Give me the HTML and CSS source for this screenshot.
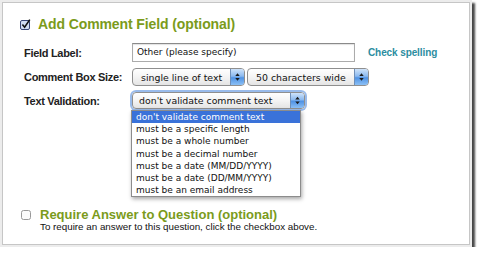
FILE: index.html
```html
<!DOCTYPE html>
<html lang="en">
<head>
  <meta charset="UTF-8">
  <title>Add Comment Field</title>
  <link rel="stylesheet" href="styles.css">
</head>
<body>
  <div class="frame">
    <div class="panel">
      <!-- comment field -->
      <h2 class="title">
        <svg class="check" width="11" height="11" viewBox="0 0 11 11">
          <rect x="0.5" y="1.5" width="9" height="9" rx="1.5" fill="#d3def2" stroke="#3a4776"/>
          <path d="M2.4 5.6 L4.6 8.2 L9.8 0.6" fill="none" stroke="#111" stroke-width="1.6"/>
        </svg>
        Add Comment Field (optional)
      </h2>

      <div class="form">
        <div class="label">Field Label:</div>
        <div class="ctrl">
          <div class="input">Other (please specify)</div>
          <a class="spell">Check spelling</a>
        </div>

        <div class="label">Comment Box Size:</div>
        <div class="ctrl">
          <div class="select size-lines"><span>single line of text</span><b class="arrows"><svg width="14" height="16" viewBox="0 0 14 16"><path d="M4.6 7 L7 4 L9.4 7Z M4.6 9 L7 12 L9.4 9Z" fill="#1b1b1b"/></svg></b></div>
          <div class="select size-width"><span>50 characters wide</span><b class="arrows"><svg width="14" height="16" viewBox="0 0 14 16"><path d="M4.6 7 L7 4 L9.4 7Z M4.6 9 L7 12 L9.4 9Z" fill="#1b1b1b"/></svg></b></div>
        </div>

        <div class="label">Text Validation:</div>
        <div class="ctrl">
          <div class="select validate focus"><span>don't validate comment text</span><b class="arrows"><svg width="14" height="15" viewBox="0 0 14 15"><path d="M4.6 6.5 L7 3.5 L9.4 6.5Z M4.6 8.5 L7 11.5 L9.4 8.5Z" fill="#1b1b1b"/></svg></b>
            <ul class="menu">
              <li class="selected">don't validate comment text</li>
              <li>must be a specific length</li>
              <li>must be a whole number</li>
              <li>must be a decimal number</li>
              <li>must be a date (MM/DD/YYYY)</li>
              <li>must be a date (DD/MM/YYYY)</li>
              <li>must be an email address</li>
            </ul>
          </div>
        </div>
      </div>

      <!-- require answer -->
      <div class="require">
        <svg class="box" width="10" height="10" viewBox="0 0 10 10">
          <rect x="0.5" y="0.5" width="9" height="9" rx="2" fill="#fbfbfb" stroke="#999"/>
        </svg>
        <div>
          <h3 class="title small">Require Answer to Question (optional)</h3>
          <p class="hint">To require an answer to this question, click the checkbox above.</p>
        </div>
      </div>
    </div>
  </div>
</body>
</html>
```

FILE: styles.css
```css
* { margin: 0; padding: 0; box-sizing: border-box; }
body {
  background: #fff;
  font-family: "Liberation Sans", Arial, sans-serif;
}
.frame {
  width: 472px;
  height: 247px;
  padding: 2px;
  background: #ececec;
  box-shadow: 3px 3px 2px rgba(0, 0, 0, 0.72);
}
.panel {
  height: 100%;
  border: 1px solid #c6c6c6;
  background: #fff;
  padding: 13px 0 0 17px;
}
.title {
  display: flex;
  align-items: center;
  height: 16px;
  font-size: 14px;
  font-weight: bold;
  color: #7b9b1b;
  letter-spacing: -0.1px;
}
.title .check { margin-right: 7px; }
.title.small {
  display: block;
  height: 12px;
  line-height: 12px;
  font-size: 13px;
  letter-spacing: 0;
}

/* form grid */
.form {
  display: grid;
  grid-template-columns: 108px auto;
  grid-template-rows: 19px 18px 17px;
  row-gap: 6px;
  margin: 11px 0 0 4px;
}
.label {
  align-self: center;
  font-size: 11px;
  font-weight: bold;
  color: #222;
  letter-spacing: -0.3px;
}
.ctrl {
  display: flex;
  align-items: center;
  gap: 2px;
  font-family: "DejaVu Sans", Verdana, sans-serif;
}
.input {
  width: 223px;
  height: 19px;
  line-height: 17px;
  padding-left: 4px;
  border: 1px solid #ababab;
  border-top-color: #8a8a8a;
  box-shadow: inset 0 1px 1px rgba(0, 0, 0, 0.12);
  font-size: 9px;
  color: #111;
}
.spell {
  margin-left: 11px;
  font-family: "Liberation Sans", Arial, sans-serif;
  font-size: 10px;
  font-weight: bold;
  color: #2c8d9f;
  letter-spacing: -0.1px;
}

/* mac style popups */
.select {
  position: relative;
  display: flex;
  align-items: center;
  height: 18px;
  padding-left: 8px;
  border: 1px solid #8f8f8f;
  border-radius: 4px;
  background: linear-gradient(#fff, #f4f4f4 50%, #e4e4e4);
  font-size: 9.4px;
  color: #111;
}
.select span { flex: 1; white-space: nowrap; }
.select .arrows {
  display: flex;
  align-self: stretch;
  width: 14px;
  border-left: 1px solid #6f8fb8;
  border-radius: 0 3px 3px 0;
  background: linear-gradient(#cfe3fa, #8bb9ef 45%, #4f92e4 55%, #8cc0f5);
}
.size-lines { width: 113px; }
.size-width { width: 122px; }
.validate {
  width: 173px;
  height: 17px;
  padding-left: 6px;
}
.select.focus { box-shadow: 0 0 0 2px rgba(98, 150, 225, 0.65); }

.menu {
  position: absolute;
  top: 17px;
  left: -2px;
  width: 170px;
  list-style: none;
  border: 1px solid #8c8c8c;
  background: #fff;
  box-shadow: 1px 2px 4px rgba(0, 0, 0, 0.35);
  font-size: 9px;
}
.menu li {
  height: 12.2px;
  line-height: 12.2px;
  padding-left: 4px;
  white-space: nowrap;
  color: #111;
}
.menu li.selected {
  background: #3a72d9;
  color: #fff;
}

/* require answer */
.require {
  display: flex;
  align-items: flex-start;
  margin: 100px 0 0 1px;
}
.require .box {
  margin: 1px 9px 0 0;
  flex-shrink: 0;
}
.hint {
  margin-top: 1px;
  font-size: 9.8px;
  line-height: 10px;
  color: #111;
}
```
